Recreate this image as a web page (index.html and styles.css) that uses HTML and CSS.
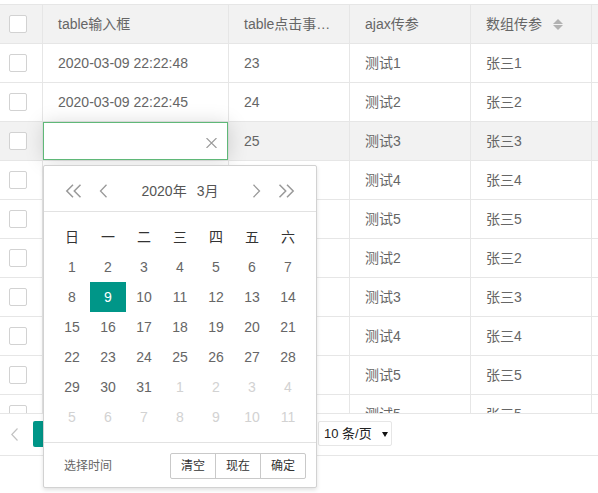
FILE: index.html
```html
<!DOCTYPE html>
<html lang="zh-CN">
<head>
<meta charset="utf-8">
<title>table</title>
<link rel="stylesheet" href="styles.css">
</head>
<body>
<div class="view">
  <div class="row thead">
    <div class="cell chk"><span class="cb"></span></div>
    <div class="cell">table输入框</div>
    <div class="cell">table点击事件弹窗</div>
    <div class="cell">ajax传参</div>
    <div class="cell sorted">数组传参<span class="sort"><i class="up"></i><i class="down"></i></span></div>
    <div class="cell"></div>
  </div>
  <div class="tbody">
    <div class="row"><div class="cell chk"><span class="cb"></span></div><div class="cell">2020-03-09 22:22:48</div><div class="cell">23</div><div class="cell">测试1</div><div class="cell">张三1</div><div class="cell"></div></div>
    <div class="row"><div class="cell chk"><span class="cb"></span></div><div class="cell">2020-03-09 22:22:45</div><div class="cell">24</div><div class="cell">测试2</div><div class="cell">张三2</div><div class="cell"></div></div>
    <div class="row hover"><div class="cell chk"><span class="cb"></span></div><div class="cell editing"><div class="edit"><svg class="clear" width="11" height="10" viewBox="0 0 11 10"><path d="M0.5 0 L10.5 10 M10.5 0 L0.5 10" stroke="#999" stroke-width="1.1" fill="none"/></svg></div></div><div class="cell">25</div><div class="cell">测试3</div><div class="cell">张三3</div><div class="cell"></div></div>
    <div class="row"><div class="cell chk"><span class="cb"></span></div><div class="cell">2020-03-09 22:22:40</div><div class="cell">26</div><div class="cell">测试4</div><div class="cell">张三4</div><div class="cell"></div></div>
    <div class="row"><div class="cell chk"><span class="cb"></span></div><div class="cell">2020-03-09 22:22:36</div><div class="cell">27</div><div class="cell">测试5</div><div class="cell">张三5</div><div class="cell"></div></div>
    <div class="row"><div class="cell chk"><span class="cb"></span></div><div class="cell">2020-03-09 22:22:31</div><div class="cell">28</div><div class="cell">测试2</div><div class="cell">张三2</div><div class="cell"></div></div>
    <div class="row"><div class="cell chk"><span class="cb"></span></div><div class="cell">2020-03-09 22:22:27</div><div class="cell">29</div><div class="cell">测试3</div><div class="cell">张三3</div><div class="cell"></div></div>
    <div class="row"><div class="cell chk"><span class="cb"></span></div><div class="cell">2020-03-09 22:22:20</div><div class="cell">30</div><div class="cell">测试4</div><div class="cell">张三4</div><div class="cell"></div></div>
    <div class="row"><div class="cell chk"><span class="cb"></span></div><div class="cell">2020-03-09 22:22:14</div><div class="cell">31</div><div class="cell">测试5</div><div class="cell">张三5</div><div class="cell"></div></div>
    <div class="row"><div class="cell chk"><span class="cb"></span></div><div class="cell">2020-03-09 22:22:09</div><div class="cell">32</div><div class="cell">测试5</div><div class="cell">张三5</div><div class="cell"></div></div>
  </div>
  <div class="page">
    <a class="pg-prev"><svg width="7" height="13" viewBox="0 0 7 13"><path d="M6.5 0.5 L0.8 6.5 L6.5 12.5" stroke="#c2c2c2" stroke-width="1.2" fill="none"/></svg></a>
    <span class="pg-curr">1</span>
    <a class="pg-a">2</a>
    <a class="pg-a">3</a>
    <a class="pg-a">&gt;</a>
    <span class="pg-skip">到第 <span class="pg-input">1</span> 页 <span class="pg-btn">确定</span></span>
    <span class="pg-count">共 30 条</span>
    <span class="pg-limit">10 条/页<i class="caret"></i></span>
  </div>

  <div class="laydate">
    <div class="ld-head">
      <svg class="ld-y" width="17" height="14" viewBox="0 0 17 14"><path d="M8 0.8 L1.8 7 L8 13.2 M15.5 0.8 L9.3 7 L15.5 13.2" stroke="#999" stroke-width="1.5" fill="none"/></svg>
      <svg class="ld-m" width="9" height="14" viewBox="0 0 9 14"><path d="M7.5 0.8 L1.5 7 L7.5 13.2" stroke="#999" stroke-width="1.3" fill="none"/></svg>
      <div class="ld-title"><span>2020年</span><span>3月</span></div>
      <svg class="ld-m" width="9" height="14" viewBox="0 0 9 14"><path d="M1.5 0.8 L7.5 7 L1.5 13.2" stroke="#999" stroke-width="1.3" fill="none"/></svg>
      <svg class="ld-y next" width="17" height="14" viewBox="0 0 17 14"><path d="M1.5 0.8 L7.7 7 L1.5 13.2 M9 0.8 L15.2 7 L9 13.2" stroke="#999" stroke-width="1.5" fill="none"/></svg>
    </div>
    <div class="ld-body">
      <div class="ld-grid">
        <span class="wk">日</span><span class="wk">一</span><span class="wk">二</span><span class="wk">三</span><span class="wk">四</span><span class="wk">五</span><span class="wk">六</span>
        <span>1</span><span>2</span><span>3</span><span>4</span><span>5</span><span>6</span><span>7</span>
        <span>8</span><span class="this">9</span><span>10</span><span>11</span><span>12</span><span>13</span><span>14</span>
        <span>15</span><span>16</span><span>17</span><span>18</span><span>19</span><span>20</span><span>21</span>
        <span>22</span><span>23</span><span>24</span><span>25</span><span>26</span><span>27</span><span>28</span>
        <span>29</span><span>30</span><span>31</span><span class="other">1</span><span class="other">2</span><span class="other">3</span><span class="other">4</span>
        <span class="other">5</span><span class="other">6</span><span class="other">7</span><span class="other">8</span><span class="other">9</span><span class="other">10</span><span class="other">11</span>
      </div>
    </div>
    <div class="ld-foot">
      <span class="ld-time">选择时间</span>
      <div class="ld-btns"><span>清空</span><span>现在</span><span>确定</span></div>
    </div>
  </div>
</div>
</body>
</html>
```

FILE: styles.css
```css
html, body {
  margin: 0;
  padding: 0;
  height: 100%;
  background: #fff;
}
body {
  font-family: "Liberation Sans", Arial, "Noto Sans CJK SC", sans-serif;
  font-size: 14px;
  color: #666;
  min-height: 493px;
}
.view {
  position: relative;
  margin-top: 4px;
  border-top: 1px solid #e6e6e6;
}
.row {
  display: grid;
  grid-template-columns: 43px 186px 121px 121px 121px 1fr;
  height: 39px;
  box-sizing: border-box;
  border-bottom: 1px solid #e6e6e6;
}
.thead {
  background: #f2f2f2;
}
.row.hover {
  background: #f2f2f2;
}
.cell {
  box-sizing: border-box;
  border-right: 1px solid #e6e6e6;
  padding: 0 15px;
  line-height: 38px;
  white-space: nowrap;
  overflow: hidden;
  text-overflow: ellipsis;
}
.cell.chk {
  padding: 0 0 0 9px;
  display: flex;
  align-items: center;
}
.cb {
  width: 18px;
  height: 18px;
  box-sizing: border-box;
  border: 1px solid #d2d2d2;
  border-radius: 2px;
  background: #fff;
}
.cell.sorted {
  display: flex;
  align-items: center;
}
.sort {
  display: inline-flex;
  flex-direction: column;
  gap: 1px;
  margin-left: 11px;
  margin-top: 1px;
}
.sort i {
  display: block;
  width: 0;
  height: 0;
  border-left: 5px solid transparent;
  border-right: 5px solid transparent;
}
.sort .up {
  border-bottom: 5px solid #b2b2b2;
}
.sort .down {
  border-top: 5px solid #b2b2b2;
}
.tbody {
  height: 369px;
  overflow: hidden;
}
.cell.editing {
  position: relative;
  overflow: visible;
}
.edit {
  position: absolute;
  left: 0;
  top: 0;
  right: 0;
  bottom: 0;
  box-sizing: border-box;
  border: 1px solid #5fb878;
  background: #fff;
  box-shadow: 1px 1px 20px rgba(0, 0, 0, 0.15);
  display: flex;
  justify-content: flex-end;
  align-items: center;
  padding-right: 10px;
  z-index: 2;
}
.clear {
  display: block;
  margin-top: 3px;
}

/* pagination */
.page {
  box-sizing: border-box;
  height: 43px;
  border-top: 1px solid #e6e6e6;
  border-bottom: 1px solid #e6e6e6;
  padding-top: 7px;
  display: flex;
  align-items: flex-start;
  line-height: 26px;
}
.pg-prev {
  display: flex;
  align-items: center;
  height: 26px;
  padding: 0 15px 0 11px;
}
.pg-prev svg {
  display: block;
  margin-top: 1px;
}
.pg-curr {
  width: 32px;
  height: 26px;
  box-sizing: border-box;
  text-align: center;
  background: #009688;
  color: #fff;
  border-radius: 2px;
}
.pg-a {
  width: 32px;
  text-align: center;
  color: #333;
}
.pg-skip {
  width: 95px;
  margin-left: 10px;
  white-space: nowrap;
  overflow: hidden;
  color: #999;
}
.pg-input {
  display: inline-block;
  width: 20px;
  text-align: center;
  border: 1px solid #e6e6e6;
  line-height: 20px;
}
.pg-btn {
  color: #333;
}
.pg-count {
  width: 52px;
  white-space: nowrap;
  color: #999;
}
.pg-limit {
  display: flex;
  align-items: center;
  width: 74px;
  height: 25px;
  box-sizing: border-box;
  border: 1px solid #e6e6e6;
  border-radius: 2px;
  padding-left: 5px;
  font-size: 13px;
  color: #222;
  white-space: nowrap;
}
.caret {
  width: 0;
  height: 0;
  margin-left: 10px;
  margin-top: 1px;
  border-left: 3px solid transparent;
  border-right: 3px solid transparent;
  border-top: 5px solid #111;
}

/* laydate popup */
.laydate {
  position: absolute;
  left: 43px;
  top: 160px;
  width: 274px;
  box-sizing: border-box;
  border: 1px solid #d2d2d2;
  border-radius: 2px;
  background: #fff;
  box-shadow: 0 2px 4px rgba(0, 0, 0, 0.12);
  color: #666;
  font-size: 14px;
  z-index: 10;
}
.ld-head {
  height: 30px;
  padding: 10px 21px 5px;
  border-bottom: 1px solid #e2e2e2;
  display: flex;
  align-items: center;
}
.ld-head svg {
  display: block;
  flex: none;
}
.ld-y {
  margin-right: 17px;
}
.ld-y.next {
  margin-right: 0;
  margin-left: 17px;
}
.ld-title {
  flex: 1;
  display: flex;
  justify-content: center;
  gap: 10px;
  color: #555;
  line-height: 30px;
}
.ld-body {
  padding: 10px;
}
.ld-grid {
  display: grid;
  grid-template-columns: repeat(7, 36px);
  grid-auto-rows: 30px;
  line-height: 30px;
  text-align: center;
}
.ld-grid .wk {
  color: #333;
}
.ld-grid .other {
  color: #d2d2d2;
}
.ld-grid .this {
  background: #009688;
  color: #fff;
}
.ld-foot {
  border-top: 1px solid #e2e2e2;
  height: 45px;
  box-sizing: border-box;
  padding: 10px 10px 0 20px;
  display: flex;
  justify-content: space-between;
  align-items: flex-start;
  font-size: 12px;
}
.ld-time {
  line-height: 26px;
  color: #666;
}
.ld-btns {
  display: flex;
}
.ld-btns span {
  height: 26px;
  line-height: 24px;
  box-sizing: border-box;
  padding: 0 10px;
  border: 1px solid #c9c9c9;
  color: #333;
  background: #fff;
  margin-left: -1px;
}
.ld-btns span:first-child {
  border-radius: 2px 0 0 2px;
}
.ld-btns span:last-child {
  border-radius: 0 2px 2px 0;
}
```
